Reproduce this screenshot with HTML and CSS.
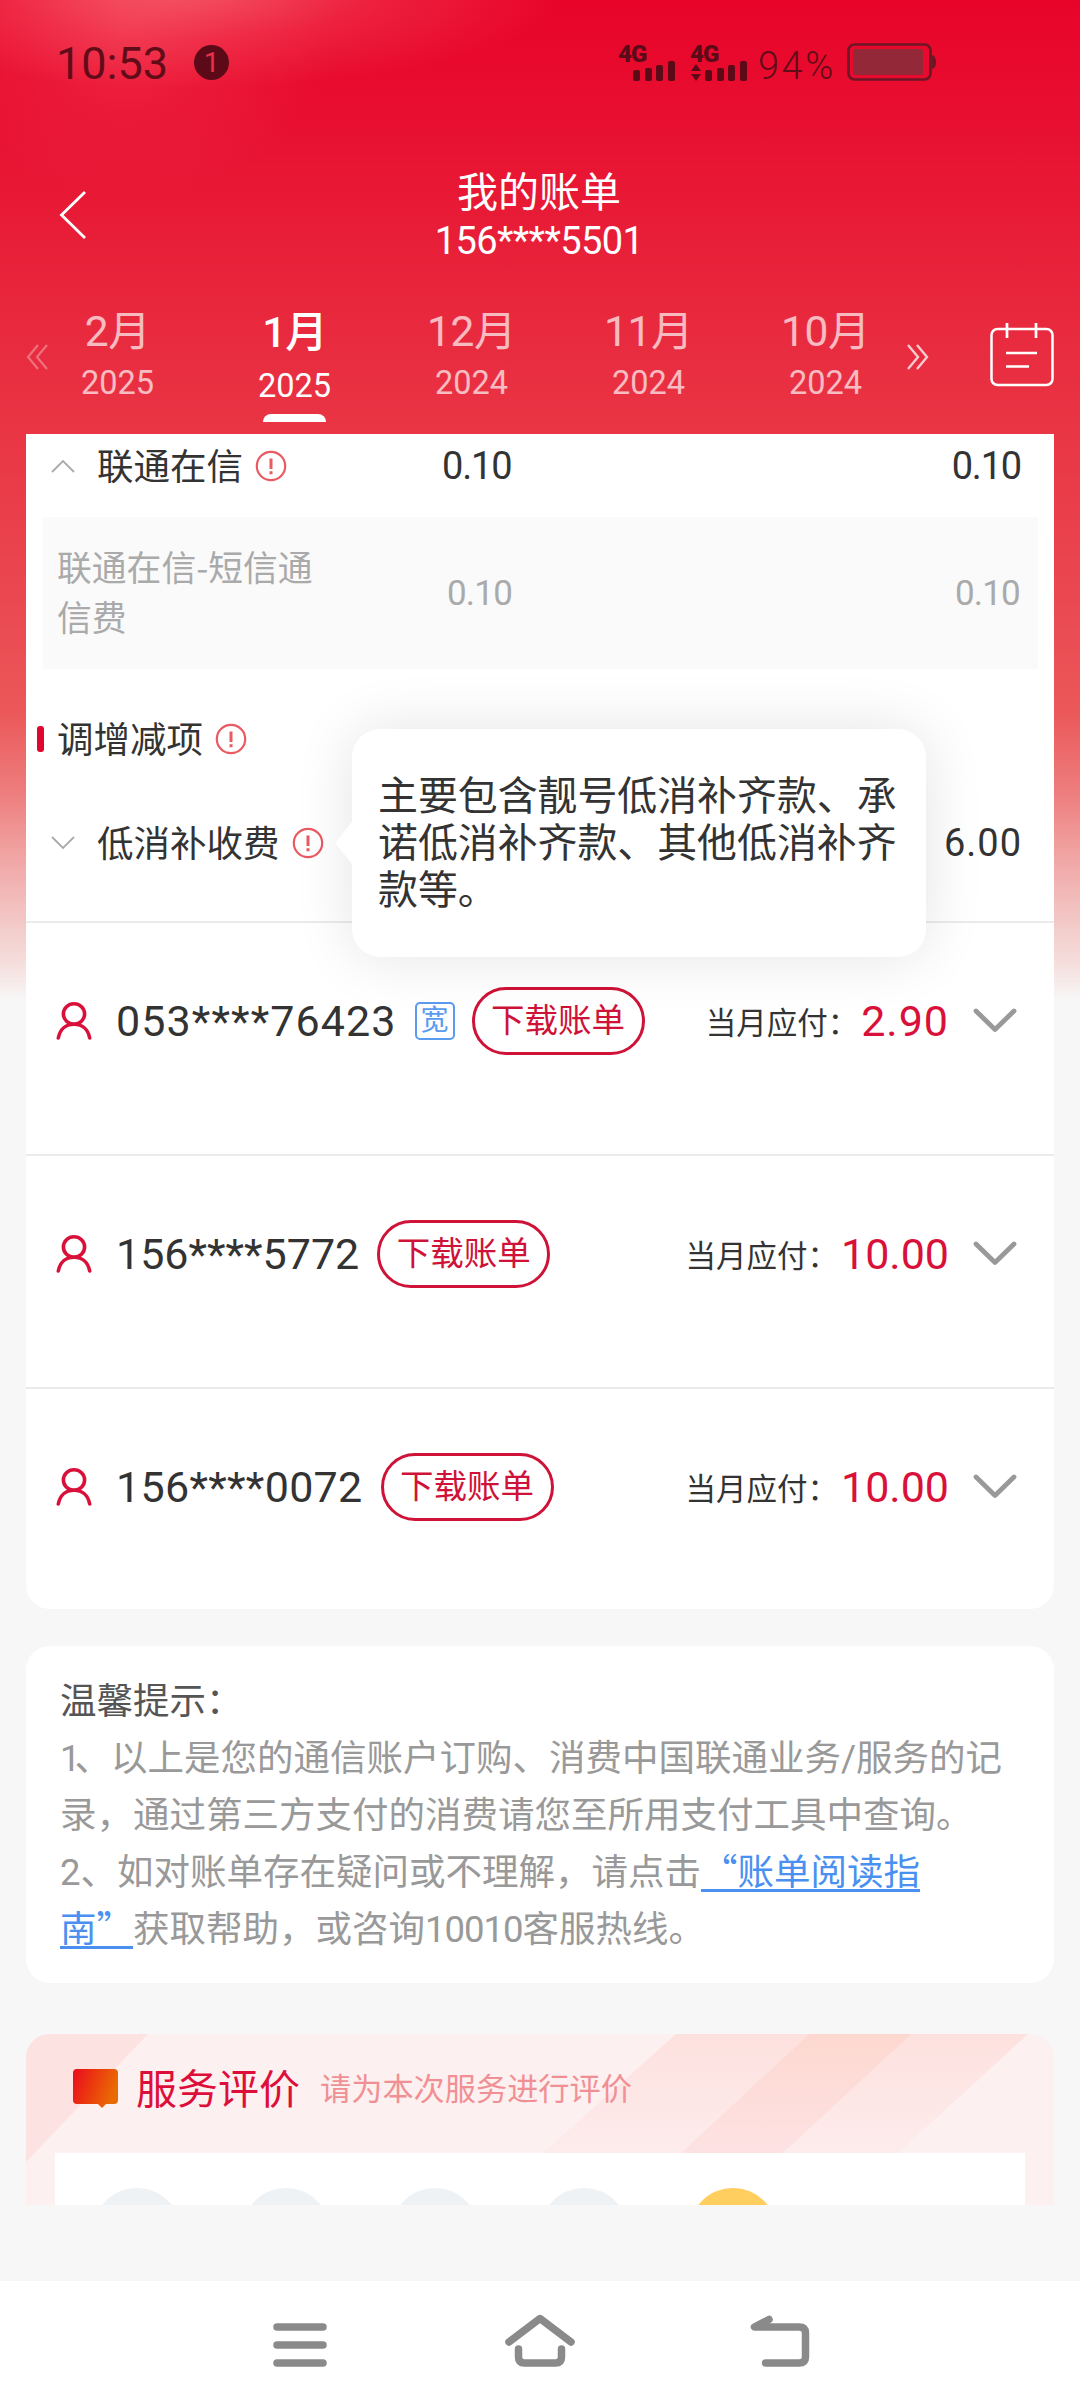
FILE: index.html
```html
<!DOCTYPE html>
<html lang="zh-CN">
<head>
<meta charset="utf-8">
<title>我的账单</title>
<link rel="stylesheet" href="styles.css">
</head>
<body>
<svg class="defs" aria-hidden="true">
  <symbol id="info" viewBox="0 0 32 32"><circle cx="16" cy="16" r="14.2" fill="none" stroke="#ea5a63" stroke-width="2.2"/><path d="M16 8.5v10.5M16 21.3v3" stroke="#ea5a63" stroke-width="3"/></symbol>
  <symbol id="user" viewBox="0 0 36 38"><g fill="none" stroke="#d9113a" stroke-width="3.6" stroke-linecap="round"><ellipse cx="18" cy="12" rx="10.6" ry="10.2"/><path d="M2.300 36C4 27 10 22.300 18 22.300S32 27 33.700 36"/></g></symbol>
  <symbol id="down" viewBox="0 0 44 26"><path d="M3 3l19 18.500L41 3" fill="none" stroke="#999" stroke-width="4.800" stroke-linecap="round" stroke-linejoin="round"/></symbol>
</svg>
<div class="screen">
  <header class="status">
    <span class="clock">10:53</span>
    <span class="notice">1</span>
    <svg class="signals" width="136" height="56" viewBox="-4 -8 136 56">
      <g fill="#5d0a18">
        <text x="-1" y="20" class="net">4G</text>
        <rect x="14" y="28" width="7" height="11" rx="2"/><rect x="26" y="26" width="7" height="13" rx="2"/><rect x="37" y="23" width="7" height="16" rx="2"/><rect x="49" y="19" width="7" height="20" rx="2"/>
        <text x="71" y="20" class="net">4G</text>
        <path d="M72 29l5-7 5 7zM72 32h10l-5 7z"/>
        <rect x="86" y="28" width="7" height="11" rx="2"/><rect x="98" y="26" width="7" height="13" rx="2"/><rect x="109" y="23" width="7" height="16" rx="2"/><rect x="121" y="19" width="7" height="20" rx="2"/>
      </g>
    </svg>
    <span class="percent">94%</span>
    <svg class="battery" width="90" height="38" viewBox="0 0 90 38">
      <rect x="1.500" y="1.500" width="82" height="35" rx="6" fill="none" stroke="#6c1626" stroke-width="2.600"/>
      <rect x="6" y="6" width="70" height="26" rx="2" fill="#932838"/>
      <path d="M85 12q4 1 4 7t-4 7z" fill="#6c1626"/>
    </svg>
  </header>

  <div class="titlebar">
    <svg class="back" width="30" height="50" viewBox="0 0 30 50"><path d="M27 2L3.500 25L27 48" fill="none" stroke="#fff" stroke-width="2.800"/></svg>
    <div class="heading">
      <h1>我的账单</h1>
      <p>156****5501</p>
    </div>
  </div>

  <nav class="months">
    <svg class="prev" width="22" height="26" viewBox="0 0 22 26"><path d="M12 1L2 13l10 12M21 1L11 13l10 12" fill="none" stroke="#fff" stroke-width="2.200"/></svg>
    <div class="month"><b>2月</b><span>2025</span></div>
    <div class="month active"><b>1月</b><span>2025</span><i></i></div>
    <div class="month"><b>12月</b><span>2024</span></div>
    <div class="month"><b>11月</b><span>2024</span></div>
    <div class="month"><b>10月</b><span>2024</span></div>
    <svg class="next" width="22" height="26" viewBox="0 0 22 26"><path d="M1 1l10 12L1 25M10 1l10 12-10 12" fill="none" stroke="#fff" stroke-width="2.400"/></svg>
    <svg class="calendar" width="64" height="66" viewBox="0 0 64 66"><g fill="none" stroke="#fff" stroke-width="2.500"><rect x="1.500" y="7" width="61" height="56" rx="6"/><path d="M17 1v15M46 1v15M16 31h31M16 44.500h23" stroke-width="2.700"/></g></svg>
  </nav>

  <main>
    <section class="bill">
      <div class="row first">
        <svg class="tick" width="24" height="14" viewBox="0 0 24 14"><path d="M1 13L12 2l11 11" fill="none" stroke="#aaa" stroke-width="1.800"/></svg>
        <span class="name">联通在信</span><svg class="info"><use href="#info"/></svg>
        <span class="mid narrow">0.10</span><span class="amt narrow">0.10</span>
      </div>
      <div class="detail">
        <span class="item">联通在信-短信通<br>信费</span><span class="mid narrow">0.10</span><span class="amt narrow">0.10</span>
      </div>
      <div class="group"><i class="bar"></i><span class="name">调增减项</span><svg class="info"><use href="#info"/></svg></div>
      <div class="row second">
        <svg class="tick" width="24" height="14" viewBox="0 0 24 14"><path d="M1 1l11 11L23 1" fill="none" stroke="#aaa" stroke-width="1.800"/></svg>
        <span class="name">低消补收费</span><svg class="info"><use href="#info"/></svg>
        <span class="amt wide">6.00</span>
        <div class="tooltip">主要包含靓号低消补齐款、承<br>诺低消补齐款、其他低消补齐<br>款等。</div>
      </div>
      <div class="account">
        <svg class="user"><use href="#user"/></svg><span class="phone wide">053****76423</span><span class="tag">宽</span><button class="pill">下载账单</button>
        <span class="label">当月应付：</span><span class="sum wide">2.90</span><svg class="down"><use href="#down"/></svg>
      </div>
      <div class="account">
        <svg class="user"><use href="#user"/></svg><span class="phone">156****5772</span><button class="pill">下载账单</button>
        <span class="label">当月应付：</span><span class="sum">10.00</span><svg class="down"><use href="#down"/></svg>
      </div>
      <div class="account">
        <svg class="user"><use href="#user"/></svg><span class="phone roomy">156****0072</span><button class="pill">下载账单</button>
        <span class="label">当月应付：</span><span class="sum">10.00</span><svg class="down"><use href="#down"/></svg>
      </div>
    </section>

    <section class="tips">
      <h2>温馨提示：</h2>
      <p><span class="one">1</span>、以上是您的通信账户订购、消费中国联通业务/服务的记<br>录，通过第三方支付的消费请您至所用支付工具中查询。<br>2、如对账单存在疑问或不理解，请点击<a>“账单阅读指<br>南”</a>获取帮助，或咨询<span class="hotline">10010</span>客服热线。</p>
    </section>

    <section class="rating">
      <svg class="stripes" width="1028" height="171" viewBox="0 0 1028 171">
        <defs>
          <linearGradient id="s1" x2="0" y2="1"><stop stop-color="#fde1de"/><stop offset="1" stop-color="#fdecec"/></linearGradient>
          <linearGradient id="s2" x2="0" y2="1"><stop stop-color="#fdd8d0"/><stop offset="1" stop-color="#fde2e3"/></linearGradient>
        </defs>
        <path d="M0 0h122L0 128z" fill="#fce2e1"/>
        <path d="M650 0h133L655 119H517z" fill="url(#s1)"/>
        <path d="M783 0h103L757 119H655z" fill="url(#s2)"/>
        <path d="M886 0h116L872 119H757z" fill="url(#s1)"/>
      </svg>
      <div class="rating-head">
        <svg width="45" height="39" viewBox="0 0 45 39"><defs><linearGradient id="bub" x2="1" y2=".3"><stop stop-color="#ea0a20"/><stop offset=".5" stop-color="#ea3a0e"/><stop offset="1" stop-color="#ea6a04"/></linearGradient></defs><path d="M4 0h37q4 0 4 4v27q0 4-4 4h-8l-4 4-4-4H4q-4 0-4-4V4q0-4 4-4z" fill="url(#bub)"/></svg>
        <strong>服务评价</strong><em>请为本次服务进行评价</em>
      </div>
      <div class="faces"><i></i><i></i><i></i><i></i><i class="on"></i></div>
    </section>
  </main>

  <footer class="sysnav">
    <svg width="56" height="48" viewBox="0 0 56 48"><path d="M5 6h46M5 24h46M5 42h46"/></svg>
    <svg width="72" height="56" viewBox="0 0 72 56"><path d="M5 29L36 5.500l31 23.500M14.500 36v8q0 6 6 6h31q6 0 6-6v-8"/></svg>
    <svg width="64" height="56" viewBox="0 0 64 56"><path d="M22 7.500L7.500 15H52q6.500 0 6.500 6v24q0 6-6.500 6H18.500"/></svg>
  </footer>
</div>
</body>
</html>
```
FILE: styles.css
```css
* { box-sizing: border-box; margin: 0; padding: 0; }
body { background: #f6f6f6; color: #333; font-family: Roboto, "Noto Sans CJK SC", sans-serif; }
.defs { display: block; width: 0; height: 0; }
.screen {
  width: 1080px; height: 2408px; display: flex; flex-direction: column; overflow: hidden;
  background:
    radial-gradient(ellipse 380px 100px at 190px -12px, rgba(255,160,155,.46), rgba(255,130,135,.22) 50%, rgba(255,100,110,0) 100%),
    radial-gradient(ellipse 210px 165px at 125px 30px, rgba(255,120,130,.28), rgba(255,100,115,.13) 50%, rgba(255,80,100,0) 100%),
    linear-gradient(#e80429 0, #e80f30 120px, #e8263c 300px, #e93645 440px, #ea4650 580px, #eb5759 710px, #ee7c7c 790px, #f0a1a0 850px, #f2c5c4 915px, #f5dfdd 965px, #f7f7f7 1000px);
}
svg { display: block; flex: none; }

.status { height: 124px; display: flex; align-items: center; color: #620c19; padding-left: 56px; }
.clock { width: 138px; font-size: 45px; padding-top: 2px; }
.notice { width: 35px; height: 35px; border-radius: 50%; background: #5d0a18; color: #e8304a; font-size: 28px; line-height: 35px; text-align: center; }
.signals { margin-left: 386px; }
.net { font: 900 24px Roboto, sans-serif; letter-spacing: -1px; }
.percent { width: 89px; margin-left: 7px; font-size: 38px; font-weight: 300; letter-spacing: 2.500px; padding-top: 7px; }

.titlebar { height: 156px; padding-left: 58px; position: relative; display: flex; }
.back { margin-top: 66px; }
.heading { flex: 1; margin-left: -90px; padding-top: 43px; text-align: center; color: #fff; }
h1 { font-size: 41px; line-height: 52px; font-weight: 400; }
.heading p { font-size: 38px; line-height: 44px; letter-spacing: -.6px; }

.months { height: 154px; display: flex; color: #fff; padding-left: 26px; }
.prev { margin: 64px -19px 0 0; opacity: .32; }
.next { margin: 64px 0 0 -7px; opacity: .75; }
.calendar { margin: 42px 0 0 61px; }
.month { width: 177px; padding-top: 24px; display: flex; flex-direction: column; align-items: center; opacity: .68; }
.month b { font-size: 42.500px; line-height: 56px; font-weight: 400; letter-spacing: -.5px; }
.month span { font-size: 32.500px; line-height: 46px; }
.month.active { opacity: 1; }
.month.active b { font-weight: 500; line-height: 57px; letter-spacing: -1px; }
.month.active span { line-height: 50px; }
.month.active i { width: 63px; height: 8px; margin-top: 3px; background: #fff; border-radius: 8px 8px 0 0; }

main { height: 1771px; overflow: hidden; padding: 0 26px; }
.bill { height: 1175px; background: #fff; border-radius: 0 0 24px 24px; }
.row { position: relative; display: flex; align-items: center; padding: 0 33px 0 25px; font-size: 38px; }
.first { height: 64px; }
.tick { margin-right: 22px; }
.name { font-size: 36.500px; padding-bottom: 3px; }
.info { width: 32px; height: 32px; margin-left: 12px; }
.first .mid { margin-left: 155px; }
.amt { margin-left: auto; }
.narrow { letter-spacing: -1.200px; }
.wide { letter-spacing: 1px; }
.roomy { letter-spacing: .3px; }
.second .amt { margin-right: -1px; }
.detail { height: 152px; margin: 19px 16px 0 17px; padding: 0 18px 0 14px; background: #fafafa; color: #aaa; display: flex; align-items: center; font-size: 35px; }
.detail .narrow { letter-spacing: -.8px; }
.item { width: 390px; padding-bottom: 5px; font-family: "Noto Sans CJK SC", sans-serif; font-size: 34.800px; line-height: 50px; }
.group { height: 64px; margin-top: 38px; padding-left: 11px; display: flex; align-items: center; }
.bar { width: 7px; height: 26px; border-radius: 3px; background: #e0062d; margin-right: 13px; }
.second { height: 152px; padding-bottom: 7px; border-bottom: 2px solid #ebebeb; }
.tooltip {
  position: absolute; left: 326px; top: -42px; width: 574px; height: 228px; z-index: 2;
  background: #fff; border-radius: 28px; box-shadow: 0 0 60px rgba(0,0,0,.11);
  padding: 44px 26px; font-size: 39.900px; line-height: 47px;
}
.tooltip::before { content: ""; position: absolute; left: -17px; top: 93px; border: solid transparent; border-width: 21px 17px 21px 0; border-right-color: #fff; }
.account { height: 231px; display: flex; align-items: center; padding: 0 37px 36px 30px; }
.account + .account { height: 233px; border-top: 2px solid #ebebeb; }
.user { width: 36px; height: 38px; }
.phone { margin-left: 24px; font-size: 43px; }
.phone.wide { letter-spacing: 1.100px; }
.tag { width: 40px; height: 38px; margin-left: 18px; border: 2px solid #5a9bf0; border-radius: 5px; color: #5a9bf0; font-size: 28px; line-height: 34px; text-align: center; }
.pill { width: 173px; height: 68px; margin-left: 18px; border: 3px solid #cf1238; border-radius: 34px; background: none; color: #cf1238; font: 33.500px/58px Roboto, "Noto Sans CJK SC", sans-serif; white-space: nowrap; }
.tag + .pill { margin-left: 17px; }
.label { margin-left: auto; font-size: 30.500px; }
.sum { margin: 0 24px 0 3px; font-size: 43px; color: #d9113a; }
.down { width: 44px; height: 26px; }

.tips { height: 337px; margin-top: 37px; padding: 27px 34px; background: #fff; border-radius: 24px; font-size: 36.500px; line-height: 57px; color: #999; white-space: nowrap; }
.tips h2 { font-size: inherit; font-weight: 400; color: #555; }
.one { letter-spacing: -6px; }
.hotline { letter-spacing: -1px; }
.tips a { font-family: "Noto Sans CJK SC", sans-serif; line-height: 1; color: #4a90f0; text-decoration: underline; text-underline-offset: 4px; text-decoration-thickness: 3px; }

.rating { position: relative; height: 260px; margin-top: 51px; background: #fdf0f0; border-radius: 24px; overflow: hidden; }
.stripes { position: absolute; left: 0; top: 0; }
.rating-head { position: relative; height: 119px; padding: 0 0 10px 47px; display: flex; align-items: center; }
.rating-head strong { margin: 0 0 6px 18px; font-size: 41px; font-weight: 400; color: #dd0f3a; }
.rating-head em { margin: 0 0 4px 20px; font-size: 31.200px; font-style: normal; color: #f09095; }
.faces { position: relative; height: 160px; margin: 0 29px; padding: 35px 0 0 38px; background: #fff; display: flex; gap: 61px; }
.faces i { width: 88px; height: 88px; border-radius: 50%; background: #eff2f5; }
.faces .on { background: #ffce5f; }

.sysnav { height: 127px; margin-top: 76px; background: #fff; display: flex; align-items: flex-start; padding: 40px 0 0 272px; }
.sysnav path { fill: none; stroke: #8a8a8a; stroke-width: 7.500; stroke-linecap: round; stroke-linejoin: round; }
.sysnav svg:nth-child(2) { margin: -8px 0 0 176px; }
.sysnav svg:nth-child(3) { margin: -9px 0 0 171px; }
```
